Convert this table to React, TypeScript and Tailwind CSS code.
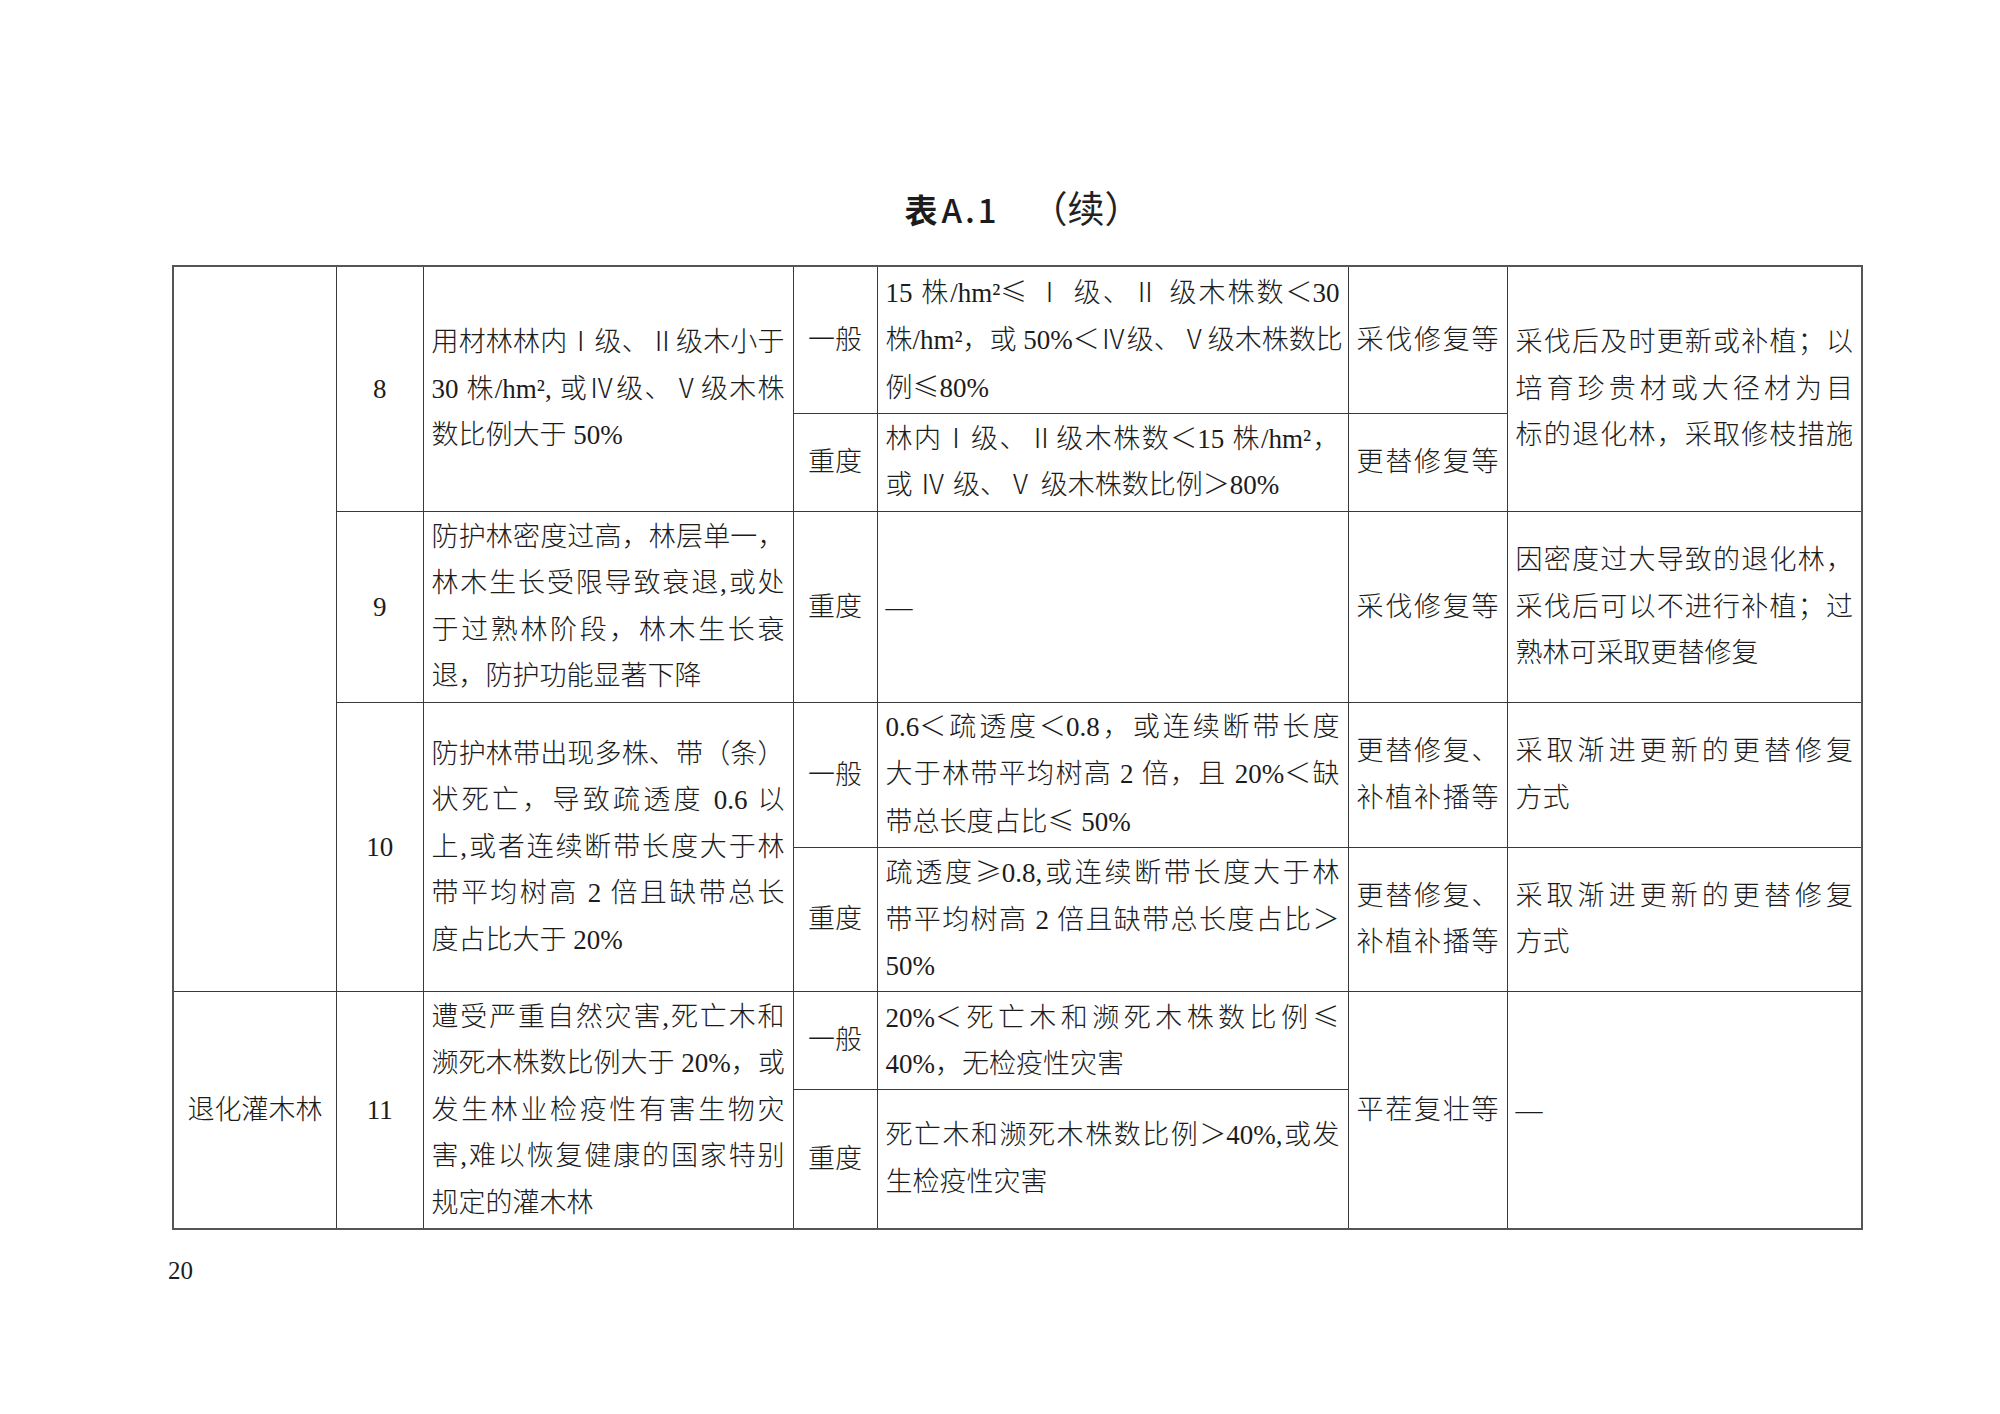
import React from 'react';

type Lines = string[];

const body = "font-['Liberation_Serif','Noto_Sans_CJK_SC',serif]";

// ≤ and ≥ are wide in the original, so take them from the CJK face
const renderLine = (line: string) =>
  line.split(/([≤≥])/).map((part, i) =>
    part === '≤' || part === '≥' ? (
      <span key={i} className="font-['Noto_Sans_CJK_SC',sans-serif]">
        {part}
      </span>
    ) : (
      <React.Fragment key={i}>{part}</React.Fragment>
    )
  );

const TextCell: React.FC<{
  lines: Lines;
  full?: boolean;
  rowSpan?: number;
  center?: boolean;
}> = ({ lines, full, rowSpan, center }) => (
  <td
    rowSpan={rowSpan}
    className={`border-[1.5px] border-[#3a3a3a] px-2 py-0 align-middle ${center ? 'text-center' : ''}`}
  >
    {lines.map((line, i) => {
      const justify = !center && (full || i < lines.length - 1);
      return (
        <div
          key={i}
          className={`whitespace-nowrap leading-[46.5px] ${
            justify ? 'text-justify [text-align-last:justify]' : center ? '' : 'text-left'
          }`}
        >
          {renderLine(line)}
        </div>
      );
    })}
  </td>
);

const App: React.FC = () => {
  return (
    <div className={`w-[2000px] h-[1414px] bg-white text-[#1c1c1c] ${body}`}>
      <div className="pt-[185px] h-[229px] flex justify-center items-baseline pl-[46px] font-['Noto_Sans_CJK_SC',sans-serif] text-[33px] leading-[44px]">
        <span className="font-bold">表</span>
        <span className="ml-[4px] tracking-[3px] font-medium">A.1</span>
        <span className="ml-[31px] text-[37px] text-[#222]">（续）</span>
      </div>

      <div className="ml-[172px] mt-[36px] w-[1689px]">
        <table className="w-[1689px] table-fixed border-collapse border-2 border-[#555] text-[27px] font-light">
          <colgroup>
            <col className="w-[163.5px]" />
            <col className="w-[86.5px]" />
            <col className="w-[370px]" />
            <col className="w-[84px]" />
            <col className="w-[471px]" />
            <col className="w-[159px]" />
            <col className="w-[355px]" />
          </colgroup>
          <tbody>
            <tr className="h-[147px]">
              <td rowSpan={5} className="border-[1.5px] border-[#3a3a3a]" />
              <TextCell lines={['8']} rowSpan={2} center />
              <TextCell
                rowSpan={2}
                lines={['用材林林内Ⅰ级、Ⅱ级木小于', '30 株/hm², 或Ⅳ级、Ⅴ级木株', '数比例大于 50%']}
              />
              <TextCell lines={['一般']} center />
              <TextCell
                lines={['15 株/hm²≤ Ⅰ 级、Ⅱ 级木株数＜30', '株/hm²，或 50%＜Ⅳ级、Ⅴ级木株数比', '例≤80%']}
              />
              <TextCell lines={['采伐修复等']} full />
              <TextCell
                rowSpan={2}
                full
                lines={['采伐后及时更新或补植；以', '培育珍贵材或大径材为目', '标的退化林，采取修枝措施']}
              />
            </tr>
            <tr className="h-[98px]">
              <TextCell lines={['重度']} center />
              <TextCell lines={['林内Ⅰ级、Ⅱ级木株数＜15 株/hm²，', '或 Ⅳ 级、Ⅴ 级木株数比例＞80%']} />
              <TextCell lines={['更替修复等']} full />
            </tr>
            <tr className="h-[191.5px]">
              <TextCell lines={['9']} center />
              <TextCell
                lines={['防护林密度过高，林层单一，', '林木生长受限导致衰退,或处', '于过熟林阶段，林木生长衰', '退，防护功能显著下降']}
              />
              <TextCell lines={['重度']} center />
              <TextCell lines={['—']} />
              <TextCell lines={['采伐修复等']} full />
              <TextCell lines={['因密度过大导致的退化林，', '采伐后可以不进行补植；过', '熟林可采取更替修复']} />
            </tr>
            <tr className="h-[144.5px]">
              <TextCell lines={['10']} rowSpan={2} center />
              <TextCell
                rowSpan={2}
                lines={[
                  '防护林带出现多株、带（条）',
                  '状死亡，导致疏透度 0.6 以',
                  '上,或者连续断带长度大于林',
                  '带平均树高 2 倍且缺带总长',
                  '度占比大于 20%',
                ]}
              />
              <TextCell lines={['一般']} center />
              <TextCell
                lines={['0.6＜疏透度＜0.8，或连续断带长度', '大于林带平均树高 2 倍，且 20%＜缺', '带总长度占比≤ 50%']}
              />
              <TextCell lines={['更替修复、', '补植补播等']} full />
              <TextCell lines={['采取渐进更新的更替修复', '方式']} />
            </tr>
            <tr className="h-[144px]">
              <TextCell lines={['重度']} center />
              <TextCell lines={['疏透度≥0.8,或连续断带长度大于林', '带平均树高 2 倍且缺带总长度占比＞', '50%']} />
              <TextCell lines={['更替修复、', '补植补播等']} full />
              <TextCell lines={['采取渐进更新的更替修复', '方式']} />
            </tr>
            <tr className="h-[98px]">
              <TextCell lines={['退化灌木林']} rowSpan={2} center />
              <TextCell lines={['11']} rowSpan={2} center />
              <TextCell
                rowSpan={2}
                lines={[
                  '遭受严重自然灾害,死亡木和',
                  '濒死木株数比例大于 20%，或',
                  '发生林业检疫性有害生物灾',
                  '害,难以恢复健康的国家特别',
                  '规定的灌木林',
                ]}
              />
              <TextCell lines={['一般']} center />
              <TextCell lines={['20%＜死亡木和濒死木株数比例≤', '40%，无检疫性灾害']} />
              <TextCell lines={['平茬复壮等']} rowSpan={2} full />
              <TextCell lines={['—']} rowSpan={2} />
            </tr>
            <tr className="h-[140px]">
              <TextCell lines={['重度']} center />
              <TextCell lines={['死亡木和濒死木株数比例＞40%,或发', '生检疫性灾害']} />
            </tr>
          </tbody>
        </table>
      </div>

      <div className="ml-[168px] mt-[26px] text-[25px] leading-[30px] font-['Liberation_Serif',serif]">20</div>
    </div>
  );
};

export default App;
